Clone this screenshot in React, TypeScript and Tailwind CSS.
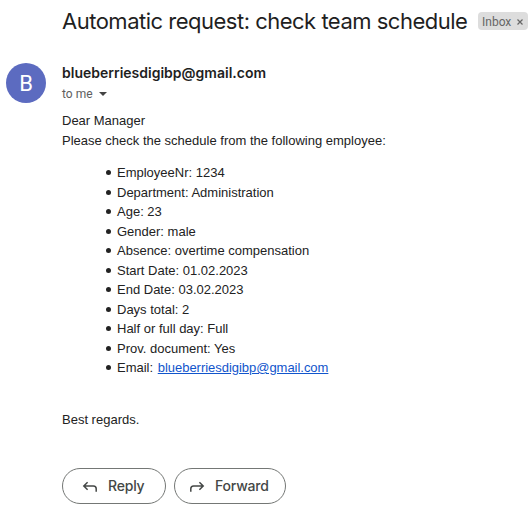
const rows = [
  'EmployeeNr: 1234', 'Department: Administration', 'Age: 23', 'Gender: male',
  'Absence: overtime compensation', 'Start Date: 01.02.2023', 'End Date: 03.02.2023',
  'Days total: 2', 'Half or full day: Full', 'Prov. document: Yes',
];

function Arrow({ flip = false }: { flip?: boolean }) {
  return (
    <svg width="20" height="20" viewBox="0 0 20 20" fill="none" stroke="#444746" strokeWidth="1.5" className={flip ? '-scale-x-100' : ''}>
      <path d="M7.6 6.2 3.8 10l3.8 3.8M4 10h9.4a2.8 2.8 0 0 1 2.8 2.8v2.9" />
    </svg>
  );
}

function Bullet() {
  return <span className="mr-[6px] size-[5px] rounded-full bg-[#222]" />;
}

export default function App() {
  return (
    <main className="h-[508px] w-[530px] overflow-hidden bg-white font-['Liberation_Sans',Arial,sans-serif] text-[#222]">
      <header className="flex h-[42px] items-center pl-[62px]">
        <h1 className="w-[416px] whitespace-nowrap font-[Inter,sans-serif] text-[22px] tracking-[-0.5px] text-[#1f1f1f]">Automatic request: check team schedule</h1>
        <span className="flex h-[18px] w-[50px] items-center justify-between rounded bg-[#ddd] pl-1 pr-[5px] pt-px font-[Roboto,sans-serif] text-xs text-[#666]">
          Inbox
          <svg width="6" height="6" viewBox="0 0 6 6" stroke="#666" strokeWidth="1.2"><path d="m.5.5 5 5m0-5-5 5" /></svg>
        </span>
      </header>
      <section className="flex h-[69px] pl-[6px] pt-[21px] font-[Inter,sans-serif]">
        <div className="flex size-10 items-center justify-center rounded-full bg-[#5c6bc0] font-[Roboto,sans-serif] text-[22px] text-white">B</div>
        <div className="ml-4">
          <div className="text-sm font-semibold leading-5 text-[#1f1f1f]">blueberriesdigibp@gmail.com</div>
          <div className="flex items-center gap-[6px] pt-px font-[Roboto,sans-serif] text-xs leading-5 text-[#5e5e5e]">to me
            <svg width="8" height="4" viewBox="0 0 8 4" fill="#444"><path d="M0 0h8L4 4z" /></svg>
          </div>
        </div>
      </section>
      <article className="h-[357px] pl-[62px] text-[13px] leading-[19.5px]">
        <p>Dear Manager</p>
        <p>Please check the schedule from the following employee:</p>
        <ul className="my-[13px] pl-[44px]">
          {rows.map((row) => <li key={row} className="flex items-center"><Bullet />{row}</li>)}
          <li className="flex items-center"><Bullet /><span>Email: <a className="ml-px text-[#15c] underline tracking-[-0.03px]">blueberriesdigibp@gmail.com</a></span></li>
        </ul>
        <p className="pt-[19.5px]">Best regards.</p>
      </article>
      <footer className="flex gap-2 pl-[62px] font-[Inter,sans-serif] text-sm font-medium text-[#444746]">
        <button className="flex h-9 w-[104px] items-center gap-2 rounded-full border border-[#747775] pl-[17px] tracking-[-0.2px]"><Arrow />Reply</button>
        <button className="flex h-9 w-[112px] items-center gap-2 rounded-full border border-[#747775] pl-3 tracking-[-0.2px]"><Arrow flip />Forward</button>
      </footer>
    </main>
  );
}
